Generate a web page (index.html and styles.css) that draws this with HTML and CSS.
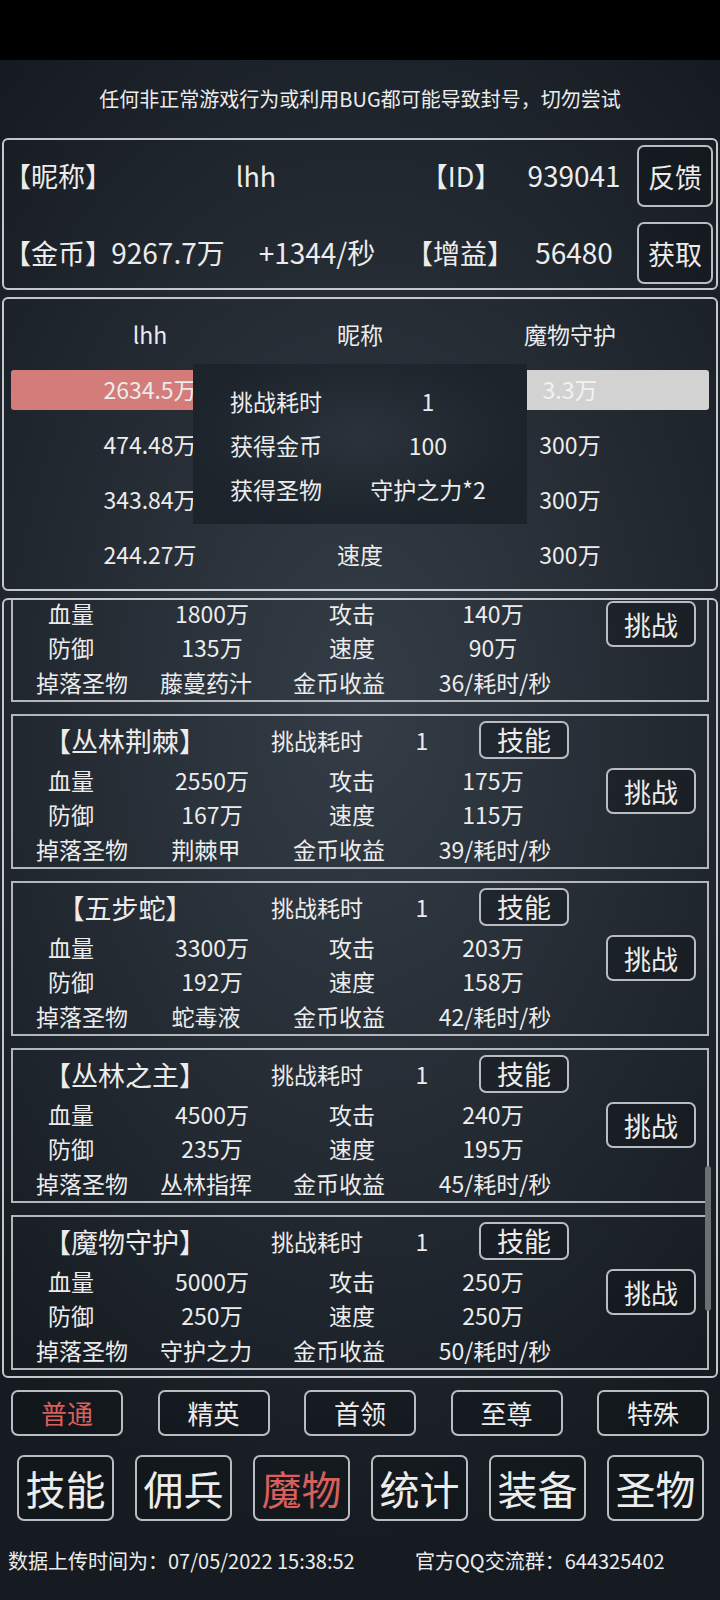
FILE: index.html
```html
<!DOCTYPE html>
<html lang="zh-CN">
<head>
<meta charset="utf-8">
<title>魔物</title>
<link rel="stylesheet" href="styles.css">
</head>
<body>
<div class="status"></div>
<main class="app">
  <p class="notice">任何非正常游戏行为或利用BUG都可能导致封号，切勿尝试</p>

  <section class="panel profile">
    <div class="prow">
      <span class="p-lbl">【昵称】</span>
      <span class="p-name">lhh</span>
      <span class="p-idl">【ID】</span>
      <span class="p-id">939041</span>
      <button class="btn btn-side">反馈</button>
    </div>
    <div class="prow">
      <span class="p-lbl">【金币】</span>
      <span class="p-gold">9267.7万</span>
      <span class="p-rate">+1344/秒</span>
      <span class="p-buffl">【增益】</span>
      <span class="p-buff">56480</span>
      <button class="btn btn-side btn-side2">获取</button>
    </div>
  </section>

  <section class="panel battle">
    <div class="bgrid">
      <div>lhh</div><div>昵称</div><div>魔物守护</div>
      <div class="bar bar-l">2634.5万</div><div class="bar bar-m"></div><div class="bar bar-r">3.3万</div>
      <div>474.48万</div><div></div><div>300万</div>
      <div>343.84万</div><div></div><div>300万</div>
      <div>244.27万</div><div>速度</div><div>300万</div>
    </div>
    <div class="popup">
      <span class="pl">挑战耗时</span><span class="pv">1</span>
      <span class="pl">获得金币</span><span class="pv">100</span>
      <span class="pl">获得圣物</span><span class="pv">守护之力*2</span>
    </div>
  </section>

  <section class="panel list">
    <div class="viewport">
      <div class="cards">
        <article class="card">
          <div class="ctitle scrolled-out"><span class="cname">【丛林藤蔓】</span><span class="ctime">挑战耗时</span><span class="cval">1</span><button class="btn btn-skill">技能</button></div>
          <div class="cgrid">
            <span class="k">血量</span><span class="n">1800万</span><span class="s">攻击</span><span>140万</span>
            <button class="btn btn-fight">挑战</button>
            <span class="k">防御</span><span class="n">135万</span><span class="s">速度</span><span>90万</span>
            <span class="k4">掉落圣物</span><span class="n4">藤蔓药汁</span><span class="s4">金币收益</span><span class="r4">36/耗时/秒</span>
          </div>
        </article>
        <article class="card">
          <div class="ctitle"><span class="cname">【丛林荆棘】</span><span class="ctime">挑战耗时</span><span class="cval">1</span><button class="btn btn-skill">技能</button></div>
          <div class="cgrid">
            <span class="k">血量</span><span class="n">2550万</span><span class="s">攻击</span><span>175万</span>
            <button class="btn btn-fight">挑战</button>
            <span class="k">防御</span><span class="n">167万</span><span class="s">速度</span><span>115万</span>
            <span class="k4">掉落圣物</span><span class="n4">荆棘甲</span><span class="s4">金币收益</span><span class="r4">39/耗时/秒</span>
          </div>
        </article>
        <article class="card">
          <div class="ctitle"><span class="cname">【五步蛇】</span><span class="ctime">挑战耗时</span><span class="cval">1</span><button class="btn btn-skill">技能</button></div>
          <div class="cgrid">
            <span class="k">血量</span><span class="n">3300万</span><span class="s">攻击</span><span>203万</span>
            <button class="btn btn-fight">挑战</button>
            <span class="k">防御</span><span class="n">192万</span><span class="s">速度</span><span>158万</span>
            <span class="k4">掉落圣物</span><span class="n4">蛇毒液</span><span class="s4">金币收益</span><span class="r4">42/耗时/秒</span>
          </div>
        </article>
        <article class="card">
          <div class="ctitle"><span class="cname">【丛林之主】</span><span class="ctime">挑战耗时</span><span class="cval">1</span><button class="btn btn-skill">技能</button></div>
          <div class="cgrid">
            <span class="k">血量</span><span class="n">4500万</span><span class="s">攻击</span><span>240万</span>
            <button class="btn btn-fight">挑战</button>
            <span class="k">防御</span><span class="n">235万</span><span class="s">速度</span><span>195万</span>
            <span class="k4">掉落圣物</span><span class="n4">丛林指挥</span><span class="s4">金币收益</span><span class="r4">45/耗时/秒</span>
          </div>
        </article>
        <article class="card">
          <div class="ctitle"><span class="cname">【魔物守护】</span><span class="ctime">挑战耗时</span><span class="cval">1</span><button class="btn btn-skill">技能</button></div>
          <div class="cgrid">
            <span class="k">血量</span><span class="n">5000万</span><span class="s">攻击</span><span>250万</span>
            <button class="btn btn-fight">挑战</button>
            <span class="k">防御</span><span class="n">250万</span><span class="s">速度</span><span>250万</span>
            <span class="k4">掉落圣物</span><span class="n4">守护之力</span><span class="s4">金币收益</span><span class="r4">50/耗时/秒</span>
          </div>
        </article>
      </div>
    </div>
    <div class="scrollbar"></div>
  </section>

  <nav class="tabs">
    <button class="btn tab active">普通</button>
    <button class="btn tab">精英</button>
    <button class="btn tab">首领</button>
    <button class="btn tab">至尊</button>
    <button class="btn tab">特殊</button>
  </nav>

  <nav class="mainnav">
    <button class="btn nav">技能</button>
    <button class="btn nav">佣兵</button>
    <button class="btn nav active">魔物</button>
    <button class="btn nav">统计</button>
    <button class="btn nav">装备</button>
    <button class="btn nav">圣物</button>
  </nav>

  <footer class="footer">
    <span class="f-time">数据上传时间为：07/05/2022 15:38:52</span>
    <span class="f-qq">官方QQ交流群：644325402</span>
  </footer>
</main>
</body>
</html>
```

FILE: styles.css
```css
* { box-sizing: border-box; }
html, body { margin: 0; padding: 0; }
body {
  width: 720px;
  height: 1600px;
  overflow: hidden;
  background: #000;
  font-family: "Noto Sans CJK SC", sans-serif;
  color: #ececec;
  line-height: 1.2;
}
.status { height: 60px; background: #000; }
.app {
  height: 1540px;
  background: radial-gradient(ellipse 75% 55% at 50% 42%, #343d47 0%, #252c34 50%, #161b21 100%);
  display: flex;
  flex-direction: column;
}
.notice {
  margin: 0;
  height: 78px;
  display: flex;
  align-items: center;
  justify-content: center;
  font-size: 20px;
}
.panel {
  margin: 0 2px;
  border: 2px solid #c4c7ca;
  border-radius: 6px;
}
.btn {
  font-family: inherit;
  color: #ececec;
  background: rgba(12, 16, 20, 0.35);
  border: 2px solid #b9bdc1;
  border-radius: 7px;
  padding: 0;
  display: flex;
  align-items: center;
  justify-content: center;
  line-height: 1;
}

/* profile */
.profile {
  height: 152px;
  padding: 5px 0 0;
  display: flex;
  flex-direction: column;
  gap: 15px;
}
.prow {
  display: flex;
  align-items: center;
  height: 62px;
  font-size: 27px;
}
.prow span { text-align: center; white-space: nowrap; }
.p-lbl { width: 104px; text-align: left !important; }
.p-name { width: 296px; }
.p-idl { width: 114px; }
.p-id { width: 112px; font-size: 28px; }
.p-gold { width: 120px; font-size: 28px; }
.p-rate { width: 178px; font-size: 28px; }
.p-buffl { width: 108px; }
.p-buff { width: 120px; font-size: 28px; }
.btn-side {
  width: 76px;
  height: 62px;
  margin-left: 7px;
  font-size: 27px;
}
.btn-side2 { margin-left: 3px; }

/* battle */
.battle {
  margin-top: 7px;
  height: 294px;
  position: relative;
  padding: 8px 7px 0;
}
.bgrid {
  display: grid;
  grid-template-columns: 278px 142px 278px;
  grid-auto-rows: 55px;
  font-size: 23px;
}
.bgrid > div {
  display: flex;
  align-items: center;
  justify-content: center;
  white-space: nowrap;
}
.bar { align-self: center; height: 40px; }
.bar-l { background: #d47c7a; border-radius: 3px 0 0 3px; }
.bar-m { background: linear-gradient(to right, #d47c7a 50%, #d2d2d2 50%); }
.bar-r { background: #d2d2d2; color: #f2f2f2; border-radius: 0 3px 3px 0; }
.popup {
  position: absolute;
  left: 189px;
  top: 65px;
  width: 334px;
  height: 160px;
  background: radial-gradient(ellipse at 50% 45%, #2a323b 0%, #1c232a 75%);
  display: grid;
  grid-template-columns: 120px 156px;
  grid-auto-rows: 44px;
  padding: 16px 0 0 37px;
  font-size: 23px;
}
.pl, .pv { display: flex; align-items: center; white-space: nowrap; }
.pv { justify-content: center; }

/* list */
.list {
  margin-top: 7px;
  height: 780px;
  position: relative;
}
.viewport {
  height: 100%;
  overflow: hidden;
  padding: 0 7px;
}
.cards {
  display: flex;
  flex-direction: column;
  gap: 12px;
  margin-top: -53px;
}
.card {
  border: 2px solid #b3b7bb;
  height: 155px;
  font-size: 23px;
}
.ctitle {
  height: 47px;
  display: flex;
  align-items: center;
}
.ctitle.scrolled-out { visibility: hidden; }
.ctitle span { text-align: center; white-space: nowrap; padding-top: 3px; }
.cname { width: 224px; font-size: 27px; }
.ctime { width: 160px; }
.cval { width: 50px; }
.btn-skill {
  width: 90px;
  height: 38px;
  margin-left: 32px;
  font-size: 27px;
}
.cgrid {
  display: grid;
  grid-template-columns: 126px 142px 128px 168px 1fr;
  grid-template-rows: 34px 34px 36px;
  line-height: 1;
}
.cgrid span {
  display: flex;
  align-items: center;
  justify-content: center;
  white-space: nowrap;
}
.cgrid .k { padding-right: 10px; }
.cgrid .k4 { padding-left: 12px; }
.cgrid .n { padding-left: 4px; }
.cgrid .n4 { padding-right: 8px; }
.cgrid .s { padding-left: 14px; }
.cgrid .s4 { padding-right: 12px; }
.cgrid .r4 { padding-left: 4px; }
.btn-fight {
  grid-column: 5;
  grid-row: 1 / span 2;
  align-self: start;
  justify-self: end;
  margin: 5px 11px 0 0;
  width: 90px;
  height: 46px;
  font-size: 27px;
}
.scrollbar {
  position: absolute;
  right: 5px;
  top: 566px;
  width: 6px;
  height: 145px;
  border-radius: 3px;
  background: #6b7075;
}

/* tabs */
.tabs {
  margin-top: 12px;
  height: 46px;
  padding: 0 11px;
  display: flex;
  justify-content: space-between;
}
.tab {
  width: 112px;
  height: 46px;
  font-size: 26px;
}
.tab.active, .nav.active { color: #d85f5b; }
.mainnav {
  margin-top: 19px;
  height: 66px;
  padding-left: 17px;
  display: flex;
  gap: 21px;
}
.nav {
  width: 97px;
  height: 66px;
  font-size: 40px;
}
.footer {
  margin-top: 28px;
  height: 24px;
  display: flex;
  align-items: center;
  font-size: 20px;
  white-space: nowrap;
}
.f-time { width: 415px; padding-left: 8px; }
```
